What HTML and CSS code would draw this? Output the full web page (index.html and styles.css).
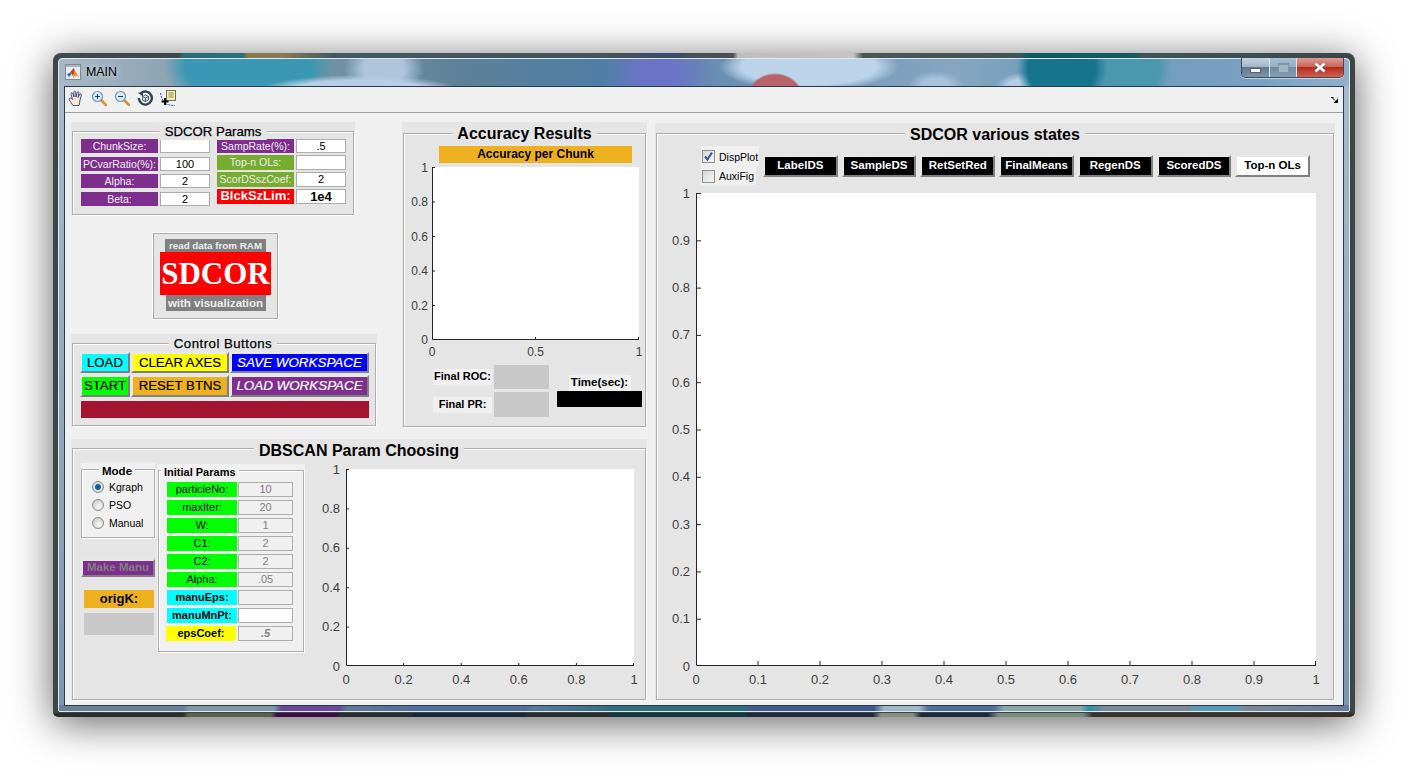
FILE: index.html
```html
<!DOCTYPE html>
<html lang="en">
<head>
<meta charset="UTF-8">
<title>MAIN</title>
<link rel="stylesheet" href="styles.css">
</head>
<body>
<div class="window">
  <div class="glass">
    <div class="titlebar">
      <svg class="app-icon" width="16" height="16" viewBox="0 0 16 16">
        <rect x="0.5" y="0.5" width="15" height="15" fill="#e6ebf0" stroke="#7d8a98"/>
        <path d="M1 1h14v2H1z" fill="#a9b4c0"/>
        <path d="M2 10.5l3-2 1.5 1.5-2.5 3z" fill="#2f6aa8"/>
        <path d="M5 8.5L8.5 4l1.5 3-2 5-2-3z" fill="#c8401a"/>
        <path d="M8.5 4c1.5 2 3 6 5.5 9-1.5-.5-2.5-2-3.5-1.5S9 13.5 8 14c0-2 2-5 .5-10z" fill="#f08c1e"/>
      </svg>
      <span class="window-name">MAIN</span>
      <div class="window-btns">
        <div class="win-btn win-min"><span class="min-bar"></span></div>
        <div class="win-btn win-max"><span class="max-box"></span></div>
        <div class="win-btn win-close">
          <svg width="14" height="11" viewBox="0 0 14 11"><path d="M2.5 1.5l9 8M11.5 1.5l-9 8" stroke="#5a6470" stroke-width="4" opacity=".5"/><path d="M2.5 1.5l9 8M11.5 1.5l-9 8" stroke="#fff" stroke-width="2.6"/></svg>
        </div>
      </div>
    </div>

    <div class="client">
      <div class="toolbar">
        <svg class="tool" width="16" height="16" viewBox="0 0 16 16">
          <path d="M5 15.5C4 13.5 2 11.5 1.2 9.8.7 8.3 2.3 7.5 3.4 8.6l1.1 1L3 4.2C2.7 2.7 4.3 2.3 4.8 3.5L6 7 5.8 2.2C5.8.8 7.6.8 7.7 2.2L8 7l1.2-4.5c.3-1.3 2-1 1.7.5L10 7.5l1.8-3.3c.6-1 2-.5 1.6.7L12 10c-.2 2-.5 3.5-1 5.5z" fill="#fde8d2" stroke="#2b4080" stroke-width=".9"/>
        </svg>
        <svg class="tool" width="16" height="16" viewBox="0 0 16 16">
          <path d="M10 10l5 5" stroke="#d8902c" stroke-width="2.6" stroke-linecap="round"/>
          <circle cx="6.5" cy="6.5" r="5" fill="#dcedf8" stroke="#6f95b4" stroke-width="1.2"/>
          <path d="M4 6.5h5M6.5 4v5" stroke="#1f3f70" stroke-width="1.1"/>
        </svg>
        <svg class="tool" width="16" height="16" viewBox="0 0 16 16">
          <path d="M10 10l5 5" stroke="#d8902c" stroke-width="2.6" stroke-linecap="round"/>
          <circle cx="6.5" cy="6.5" r="5" fill="#dcedf8" stroke="#6f95b4" stroke-width="1.2"/>
          <path d="M4 6.5h5" stroke="#1f3f70" stroke-width="1.1"/>
        </svg>
        <svg class="tool" width="16" height="16" viewBox="0 0 16 16">
          <path d="M4 3.2A6.5 6.5 0 1 1 1.8 8" fill="none" stroke="#2f4358" stroke-width="2.4"/>
          <path d="M.5 2.5H6v4z" fill="#2f4358"/>
          <path d="M5.5 6.5L8.5 5l3 1.5V10l-3 1.5-3-1.5zM5.5 6.5l3 1.5 3-1.5M8.5 8v3.5" fill="#d5dde4" stroke="#2f4358" stroke-width=".8"/>
        </svg>
        <svg class="tool" width="16" height="16" viewBox="0 0 16 16">
          <path d="M.5 3C1 7 3 12 6 14c3 1 6 1.5 9 1.5" fill="none" stroke="#2030d0" stroke-width=".9" stroke-dasharray="2 1"/>
          <rect x="6.5" y="0.5" width="9" height="10" fill="#f2efb4" stroke="#74744a"/>
          <path d="M8.5 3h5M8.5 5h5M8.5 7h5" stroke="#8a8a58"/>
          <path d="M1.5 11.5h7M5 8v7" stroke="#000" stroke-width="2"/>
        </svg>
        <svg class="dock-arrow" width="7" height="6" viewBox="0 0 7 6">
          <path d="M0 .5h2.5M1 .5l3 3" stroke="#000" fill="none"/>
          <path d="M7 1.5V6H2.5z" fill="#000"/>
        </svg>
      </div>

      <div class="workspace">
        <div class="left-area">
          <div class="top-row">
            <div class="left-col">

              <section class="panel params-panel">
                <h2 class="panel-title title-small">SDCOR Params</h2>
                <div class="panel-box params-box">
                  <div class="param-col param-col-left">
                    <div class="param-row"><span class="lbl purple">ChunkSize:</span><span class="val"></span></div>
                    <div class="param-row"><span class="lbl purple">PCvarRatio(%):</span><span class="val">100</span></div>
                    <div class="param-row"><span class="lbl purple">Alpha:</span><span class="val">2</span></div>
                    <div class="param-row"><span class="lbl purple">Beta:</span><span class="val">2</span></div>
                  </div>
                  <div class="param-col param-col-right">
                    <div class="param-row row-first"><span class="lbl purple">SampRate(%):</span><span class="val">.5</span></div>
                    <div class="param-row"><span class="lbl olive">Top-n OLs:</span><span class="val"></span></div>
                    <div class="param-row"><span class="lbl olive">ScorDSszCoef:</span><span class="val">2</span></div>
                    <div class="param-row"><span class="lbl red big">BlckSzLim:</span><span class="val big">1e4</span></div>
                  </div>
                </div>
              </section>

              <div class="logo-box">
                <div class="logo-top">read data from RAM</div>
                <div class="logo-name">SDCOR</div>
                <div class="logo-bottom">with visualization</div>
              </div>

              <section class="panel control-panel">
                <h2 class="panel-title title-small">Control Buttons</h2>
                <div class="panel-box control-box">
                  <div class="control-grid">
                    <button class="btn cyan">LOAD</button>
                    <button class="btn yellow">CLEAR AXES</button>
                    <button class="btn blue wide">SAVE WORKSPACE</button>
                    <button class="btn green">START</button>
                    <button class="btn orange">RESET BTNS</button>
                    <button class="btn purple wide">LOAD WORKSPACE</button>
                  </div>
                  <div class="status-bar"></div>
                </div>
              </section>
            </div>

            <section class="panel accuracy-panel">
              <h2 class="panel-title title-big">Accuracy Results</h2>
              <div class="panel-box accuracy-box">
                <div class="chunk-title">Accuracy per Chunk</div>
                <svg class="axes axes-accuracy" width="207" height="173">
                  <path class="axis" d="M.5 0V172.5H207"/>
                  <path class="axis" d="M0 .5h3M0 35h3M0 69.5h3M0 104h3M0 138.5h3M103.5 173v-3M206.5 173v-3"/>
                  <g class="tick-y tick-small">
                    <text x="-4" y="5">1</text><text x="-4" y="39">0.8</text><text x="-4" y="73.5">0.6</text>
                    <text x="-4" y="108">0.4</text><text x="-4" y="143">0.2</text><text x="-4" y="177">0</text>
                  </g>
                  <g class="tick-x tick-small">
                    <text x="0" y="189">0</text><text x="103.5" y="189">0.5</text><text x="207" y="189">1</text>
                  </g>
                </svg>
                <div class="result-area">
                  <div class="result-col">
                    <div class="result-row"><span class="result-lbl">Final ROC:</span><span class="result-val roc-val"></span></div>
                    <div class="result-row"><span class="result-lbl">Final PR:</span><span class="result-val pr-val"></span></div>
                  </div>
                  <div class="time-col">
                    <span class="time-lbl">Time(sec):</span>
                    <span class="time-val"></span>
                  </div>
                </div>
              </div>
            </section>
          </div>

          <section class="panel dbscan-panel">
            <h2 class="panel-title title-big">DBSCAN Param Choosing</h2>
            <div class="panel-box dbscan-box">
              <div class="dbscan-left">
                <div class="subpanel mode-panel">
                  <h3 class="sub-title mode-title">Mode</h3>
                  <div class="sub-box mode-box">
                    <label class="radio-row"><span class="radio radio-on"></span>Kgraph</label>
                    <label class="radio-row"><span class="radio"></span>PSO</label>
                    <label class="radio-row"><span class="radio"></span>Manual</label>
                  </div>
                </div>
                <button class="btn purple make-manu">Make Manu</button>
                <div class="origk">origK:</div>
                <div class="origk-val"></div>
              </div>

              <div class="subpanel init-panel">
                <h3 class="sub-title init-title">Initial Params</h3>
                <div class="sub-box init-box">
                  <div class="init-row"><span class="init-lbl lime">particleNo:</span><span class="init-val purple-text">10</span></div>
                  <div class="init-row"><span class="init-lbl lime">maxIter:</span><span class="init-val">20</span></div>
                  <div class="init-row"><span class="init-lbl lime">W:</span><span class="init-val">1</span></div>
                  <div class="init-row"><span class="init-lbl lime">C1:</span><span class="init-val">2</span></div>
                  <div class="init-row"><span class="init-lbl lime">C2:</span><span class="init-val">2</span></div>
                  <div class="init-row"><span class="init-lbl lime">Alpha:</span><span class="init-val">.05</span></div>
                  <div class="init-row"><span class="init-lbl aqua">manuEps:</span><span class="init-val"></span></div>
                  <div class="init-row"><span class="init-lbl aqua">manuMnPt:</span><span class="init-val val-white"></span></div>
                  <div class="init-row"><span class="init-lbl gold">epsCoef:</span><span class="init-val val-italic">.5</span></div>
                </div>
              </div>

              <svg class="axes axes-dbscan" width="288" height="197">
                <path class="axis" d="M.5 0V196.5H288"/>
                <path class="axis" d="M0 .5h3M0 39.9h3M0 79.3h3M0 118.7h3M0 158.1h3M57.6 197v-3M115.2 197v-3M172.8 197v-3M230.4 197v-3M287.5 197v-3"/>
                <g class="tick-y">
                  <text x="-6" y="4.5">1</text><text x="-6" y="43.9">0.8</text><text x="-6" y="83.3">0.6</text>
                  <text x="-6" y="122.7">0.4</text><text x="-6" y="162.1">0.2</text><text x="-6" y="201.5">0</text>
                </g>
                <g class="tick-x">
                  <text x="0" y="215">0</text><text x="57.6" y="215">0.2</text><text x="115.2" y="215">0.4</text>
                  <text x="172.8" y="215">0.6</text><text x="230.4" y="215">0.8</text><text x="288" y="215">1</text>
                </g>
              </svg>
            </div>
          </section>
        </div>

        <section class="panel states-panel">
          <h2 class="panel-title title-big">SDCOR various states</h2>
          <div class="panel-box states-box">
            <div class="states-top">
              <div class="checks">
                <label class="check-row check-first"><span class="check check-on"><svg width="11" height="11" viewBox="0 0 11 11"><path d="M2 5.5l2.5 3L9 1.5" fill="none" stroke="#3f4fa0" stroke-width="2"/></svg></span>DispPlot</label>
                <label class="check-row check-second"><span class="check"></span>AuxiFig</label>
              </div>
              <div class="state-btns">
                <button class="btn state-btn">LabelDS</button>
                <button class="btn state-btn">SampleDS</button>
                <button class="btn state-btn">RetSetRed</button>
                <button class="btn state-btn">FinalMeans</button>
                <button class="btn state-btn">RegenDS</button>
                <button class="btn state-btn">ScoredDS</button>
                <button class="btn state-btn state-btn-on">Top-n OLs</button>
              </div>
            </div>
            <svg class="axes axes-states" width="620" height="473">
              <path class="axis" d="M.5 0V472.5H620"/>
              <path class="axis" d="M0 .5h5M0 47.8h5M0 95.1h5M0 142.4h5M0 189.7h5M0 237h5M0 284.3h5M0 331.6h5M0 378.9h5M0 426.2h5M62 473v-5M124 473v-5M186 473v-5M248 473v-5M310 473v-5M372 473v-5M434 473v-5M496 473v-5M558 473v-5M619.5 473v-5"/>
              <g class="tick-y">
                <text x="-6" y="4.5">1</text><text x="-6" y="51.8">0.9</text><text x="-6" y="99.1">0.8</text>
                <text x="-6" y="146.4">0.7</text><text x="-6" y="193.7">0.6</text><text x="-6" y="241">0.5</text>
                <text x="-6" y="288.3">0.4</text><text x="-6" y="335.6">0.3</text><text x="-6" y="382.9">0.2</text>
                <text x="-6" y="430.2">0.1</text><text x="-6" y="477.5">0</text>
              </g>
              <g class="tick-x">
                <text x="0" y="491">0</text><text x="62" y="491">0.1</text><text x="124" y="491">0.2</text>
                <text x="186" y="491">0.3</text><text x="248" y="491">0.4</text><text x="310" y="491">0.5</text>
                <text x="372" y="491">0.6</text><text x="434" y="491">0.7</text><text x="496" y="491">0.8</text>
                <text x="558" y="491">0.9</text><text x="620" y="491">1</text>
              </g>
            </svg>
          </div>
        </section>
      </div>
    </div>
  </div>
</div>
</body>
</html>
```

FILE: styles.css
```css
* {
  box-sizing: border-box;
}

html, body {
  margin: 0;
  height: 100%;
  overflow: hidden;
}

body {
  background-color: white;
  font-family: "Liberation Sans", Arial, sans-serif;
  color: black;
  padding: 53px 0 0 53px;
}

/* window frame */
.window {
  width: 1302px;
  height: 664px;
  padding: 5px;
  border-radius: 8px 8px 5px 5px;
  box-shadow: 0 6px 40px rgba(0, 0, 0, 0.62);
  background-color: #3b4647;
  background-image:
    linear-gradient(90deg, #3d4a4d 0, #3d4a4d 125px, #2a6a74 130px, #2c7078 190px, #8a7a50 195px, #8a7a50 230px, #3e5a60 280px, #46525a 560px, #3a4a70 610px, #3a4a70 625px, #46525a 640px, #4a5050 680px, #bdbdbd 685px, #c4c4c4 800px, #4a5655 810px, #3f5558 965px, #0f5a60 975px, #115c60 1080px, #3d5558 1090px, #3a4648 1302px),
    linear-gradient(90deg, #2c2c2c 0, #2c2c2c 130px, #5c604c 135px, #5c604c 218px, #3a1040 224px, #3a1040 282px, #2c2c2c 288px, #2c2c2c 358px, #1f2538 362px, #1f2538 470px, #2c2c2c 476px, #2c2c2c 555px, #12383c 560px, #12383c 690px, #22283c 695px, #22283c 820px, #8a8a80 828px, #8a8a80 860px, #22283c 868px, #22283c 935px, #7a8a80 945px, #7a8a80 1030px, #3a3028 1040px, #3a3028 1302px);
  background-size: 100% 5px, 100% 4px;
  background-position: 0 0, 0 100%;
  background-repeat: no-repeat;
}

.glass {
  height: 100%;
  padding: 0 5px 5px;
  border: 1px solid #dfe8ee;
  border-radius: 4px 4px 2px 2px;
  background-color: #8ca4b6;
  background-image:
    radial-gradient(ellipse 28px 24px at 716px 38px, #b8626a 92%, transparent 100%),
    radial-gradient(ellipse 90px 24px at 750px 8px, #bcd4ea 75%, transparent 100%),
    radial-gradient(ellipse 28px 16px at 877px 28px, #a8c4dc 50%, transparent 100%),
    radial-gradient(ellipse 105px 18px at 300px 34px, #b7cfe6 70%, transparent 100%),
    radial-gradient(ellipse 40px 30px at 325px 10px, #aec6dc 50%, transparent 100%),
    radial-gradient(ellipse 85px 44px at 190px 8px, #3b97b3 75%, transparent 100%),
    radial-gradient(ellipse 55px 44px at 600px 14px, #6b73c9 25%, transparent 100%),
    radial-gradient(ellipse 45px 44px at 1003px 10px, #17748e 75%, transparent 100%),
    radial-gradient(ellipse 40px 44px at 1072px 10px, #4a98b0 70%, transparent 100%),
    radial-gradient(ellipse 25px 14px at 962px 28px, #b4cce4 55%, transparent 100%),
    linear-gradient(90deg, #a8b9c6 0, #8ea6b6 100px, #5e8198 400px, #4f7da6 540px, #6e90b5 680px, #86a6c0 900px, #6c9abb 1000px, #7aa0c2 1200px, #8fb0c8 100%),
    linear-gradient(90deg, #6a7f9a 0, #6a7f9a 125px, #7d9ba5 130px, #7d9ba5 215px, #6a4a9a 222px, #6a4a9a 280px, #5f7a98 288px, #506f9a 360px, #506f9a 465px, #5a7a9a 475px, #2f6f80 555px, #2f6f80 685px, #3f5a92 695px, #3f5a92 815px, #a0b8c8 825px, #a0b8c8 860px, #4f6f9a 870px, #4f6f9a 935px, #8aa8a8 945px, #8aa8a8 1022px, #2a90a8 1030px, #7a8a98 1045px, #7a8a98 1128px, #5a9ab8 1135px, #5a9ab8 1178px, #7a8a98 1185px, #6a7a9a 100%),
    linear-gradient(#a9bccb, #7c97b0);
  background-size: 100% 27px, 100% 27px, 100% 27px, 100% 27px, 100% 27px, 100% 27px, 100% 27px, 100% 27px, 100% 27px, 100% 27px, 100% 27px, 100% 6px, 100% 100%;
  background-position: 0 0, 0 0, 0 0, 0 0, 0 0, 0 0, 0 0, 0 0, 0 0, 0 0, 0 0, 0 100%, 0 0;
  background-repeat: no-repeat;
}

.titlebar {
  display: flex;
  align-items: flex-start;
  height: 27px;
}

.app-icon {
  margin: 5px 0 0 1px;
}

.window-name {
  margin: 5px 0 0 5px;
  font-size: 12.4px;
  line-height: 16px;
  text-shadow: 0 0 6px rgba(255, 255, 255, 0.75);
}

.window-btns {
  display: flex;
  flex: none;
  width: 103px;
  height: 20px;
  margin: -1px 0 0 auto;
  border: 1px solid #3c4c5c;
  border-top: 0;
  border-radius: 0 0 5px 5px;
  overflow: hidden;
  box-shadow: 0 1px 0 rgba(255, 255, 255, 0.5);
}

.win-btn {
  display: flex;
  align-items: center;
  justify-content: center;
  background: linear-gradient(#c3d2de 0, #a4b8c8 45%, #64798e 50%, #7e93a6 100%);
  border-right: 1px solid #dbe4ea;
}

.win-min {
  width: 28px;
}

.win-max {
  width: 27px;
  background: linear-gradient(#a8c0d2 0, #94aec2 45%, #6f8ca4 50%, #85a0b4 100%);
}

.win-close {
  flex: 1;
  border-right: 0;
  background: linear-gradient(#dc9c92 0, #c9685c 45%, #b52c1e 50%, #d0614e 100%);
}

.min-bar {
  display: block;
  width: 11px;
  height: 5px;
  margin-top: 5px;
  background-color: white;
  border: 1px solid #55626f;
}

.max-box {
  display: block;
  width: 11px;
  height: 10px;
  border: 1px solid #7d96a8;
  border-top-width: 2px;
  background-color: #a0b8c8;
}

.client {
  height: calc(100% - 27px);
  border: 1px solid #2b3a48;
  background-color: #f0f0f0;
}

.toolbar {
  display: flex;
  align-items: center;
  gap: 7px;
  height: 26px;
  padding: 0 5px 3px 3px;
  border-bottom: 1px solid #a0a0a0;
}

.dock-arrow {
  margin: 3px 0 0 auto;
}

.workspace {
  display: flex;
  gap: 8px;
  padding: 9px 0 0 6px;
}

.left-area {
  width: 576px;
}

.top-row {
  display: flex;
  gap: 25px;
  height: 317px;
}

.left-col {
  width: 306px;
}

/* titled panels */
.panel {
  position: relative;
  background-color: #e5e5e5;
  padding: 9px 1px 1px;
}

.panel-box {
  height: 100%;
  border: 1px solid #adadad;
  box-shadow: inset 1px 1px 0 white, 1px 1px 0 white;
}

.panel-title {
  position: absolute;
  left: 50%;
  transform: translateX(-50%);
  margin: 0;
  padding: 0 5px;
  background-color: #e5e5e5;
  white-space: nowrap;
}

.title-small {
  top: 2px;
  font-size: 13.2px;
  font-weight: normal;
  line-height: 16px;
  -webkit-text-stroke: 0.25px black;
}

.control-panel .title-small {
  margin-left: -1px;
  letter-spacing: 0.5px;
}

.title-big {
  top: 2px;
  font-size: 16px;
  font-weight: bold;
  line-height: 20px;
}

/* SDCOR params */
.params-panel {
  width: 284px;
  height: 94px;
}

.params-box {
  display: flex;
  gap: 7px;
  padding: 7px 0 0 8px;
}

.param-col {
  display: flex;
  flex-direction: column;
  width: 129px;
}

.param-col-left {
  gap: 3.5px;
}

.param-col-left .param-row {
  height: 14px;
}

.param-col-right {
  gap: 2px;
}

.param-col-right .param-row {
  height: 15px;
}

.param-col-right .row-first {
  height: 14px;
}

.param-row {
  display: flex;
  gap: 2px;
}

.lbl {
  flex: none;
  width: 77px;
  font-size: 10.5px;
  line-height: 14px;
  text-align: center;
  white-space: nowrap;
  color: #eee;
}

.val {
  flex: 1;
  background-color: white;
  border: 1px solid #adadad;
  font-size: 11px;
  line-height: 13px;
  text-align: center;
}

.purple {
  background-color: #7e2f8e;
}

.olive {
  background-color: #77ac30;
}

.red {
  background-color: #ff0000;
}

.big {
  font-size: 13px;
  font-weight: bold;
}

.lbl.big {
  color: white;
}

/* logo block */
.logo-box {
  display: flex;
  flex-direction: column;
  align-items: center;
  width: 125px;
  height: 86px;
  margin: 17px 0 15px 82px;
  padding-top: 5px;
  background-color: #e5e5e5;
  border: 1px solid #adadad;
  box-shadow: 0 0 0 1px white;
}

.logo-top,
.logo-bottom {
  background-color: #808080;
  color: #eee;
  font-weight: bold;
  text-align: center;
  white-space: nowrap;
}

.logo-top {
  width: 101px;
  height: 13px;
  font-size: 9.8px;
  line-height: 13px;
}

.logo-bottom {
  width: 100px;
  height: 16px;
  font-size: 11.5px;
  line-height: 16px;
}

.logo-name {
  width: 111px;
  height: 43px;
  background-color: #ff0000;
  color: white;
  font-family: "Liberation Serif", serif;
  font-size: 31px;
  font-weight: bold;
  line-height: 43px;
  text-align: center;
}

/* control buttons */
.control-panel {
  height: 93px;
}

.control-box {
  padding: 8px 0 0 7px;
}

.control-grid {
  display: grid;
  grid-template-columns: 50px 98px 139px;
  grid-template-rows: 21px 22px;
  gap: 2px 1px;
}

.btn {
  margin: 0;
  padding: 0;
  border: 2px solid;
  border-color: #e8e8e8 #808080 #808080 #e8e8e8;
  font-family: inherit;
  font-size: 13.2px;
  line-height: 1;
  white-space: nowrap;
  color: black;
  -webkit-text-stroke: 0.2px currentColor;
}

.cyan {
  background-color: #00ffff;
}

.yellow {
  background-color: #ffff00;
}

.green {
  background-color: #00ff00;
}

.orange {
  background-color: #edb120;
}

.blue {
  background-color: #0000ff;
}

.wide {
  font-size: 13.4px;
  font-style: italic;
  color: white;
}

.status-bar {
  width: 288px;
  height: 17px;
  margin: 4px 0 0 1px;
  background-color: #a2142f;
}

/* accuracy */
.accuracy-panel {
  width: 245px;
  height: 306px;
  padding-top: 11px;
}

.accuracy-box {
  padding-top: 12px;
}

.chunk-title {
  width: 193px;
  height: 17px;
  margin-left: 35px;
  background-color: #edb120;
  font-size: 12px;
  font-weight: bold;
  line-height: 16px;
  text-align: center;
}

.axes {
  display: block;
  overflow: visible;
  background-color: white;
}

.axis {
  fill: none;
  stroke: #262626;
  stroke-width: 1;
}

.tick-y text,
.tick-x text {
  fill: #404040;
  font-size: 13px;
}

.tick-small text {
  font-size: 12px;
}

.tick-y {
  text-anchor: end;
}

.tick-x {
  text-anchor: middle;
}

.axes-accuracy {
  margin: 4px 0 0 28px;
}

.result-area {
  display: flex;
  margin: 25px 0 0 29px;
}

.result-col {
  display: flex;
  flex-direction: column;
  gap: 3px;
}

.result-row {
  display: flex;
  align-items: center;
  gap: 2px;
}

.result-lbl {
  width: 59px;
  height: 16px;
  background-color: #f0f0f0;
  font-size: 11px;
  font-weight: bold;
  line-height: 15px;
  text-align: center;
}

.result-val {
  width: 55px;
  background-color: #c8c8c8;
}

.roc-val {
  height: 24px;
}

.pr-val {
  height: 25px;
}

.time-col {
  display: flex;
  flex-direction: column;
  align-items: center;
  width: 85px;
  margin: 10px 0 0 8px;
}

.time-lbl {
  width: 62px;
  height: 16px;
  background-color: #f0f0f0;
  font-size: 11.5px;
  font-weight: bold;
  line-height: 15px;
  text-align: center;
}

.time-val {
  width: 85px;
  height: 16px;
  background-color: black;
}

/* dbscan */
.dbscan-panel {
  height: 262px;
}

.dbscan-box {
  display: flex;
  align-items: flex-start;
  padding: 14px 0 0 8px;
}

.dbscan-left {
  width: 74px;
}

.subpanel {
  position: relative;
  background-color: #f0f0f0;
  padding-top: 6px;
}

.sub-box {
  height: 100%;
  border: 1px solid #adadad;
  box-shadow: inset 1px 1px 0 white, 1px 1px 0 white;
}

.sub-title {
  position: absolute;
  top: 1px;
  margin: 0;
  padding: 0 3px;
  background-color: #f0f0f0;
  font-size: 11.5px;
  font-weight: bold;
  line-height: 14px;
}

.mode-panel {
  height: 75px;
}

.mode-title {
  left: 18px;
}

.mode-box {
  padding: 8px 0 0 10px;
}

.radio-row {
  display: flex;
  align-items: center;
  gap: 5px;
  height: 18px;
  font-size: 10.5px;
}

.radio {
  width: 12px;
  height: 12px;
  border: 1px solid #8c8c8c;
  border-radius: 50%;
  background: radial-gradient(circle at 60% 65%, #f2f2f2 15%, #bcbcbc 100%);
}

.radio-on {
  background: radial-gradient(circle, #0b4f7e 0, #1a70a8 38%, #e2e2e2 48%, #c8c8c8 100%);
}

.make-manu {
  display: block;
  width: 74px;
  height: 18px;
  margin-top: 21px;
  font-size: 11.5px;
  font-weight: bold;
  color: #808080;
  -webkit-text-stroke: 0;
}

.origk {
  width: 70px;
  height: 18px;
  margin: 13px 0 0 3px;
  background-color: #edb120;
  font-size: 13px;
  font-weight: bold;
  line-height: 17px;
  text-align: center;
}

.origk-val {
  width: 70px;
  height: 22px;
  margin: 5px 0 0 3px;
  background-color: #c8c8c8;
}

.init-panel {
  width: 148px;
  height: 188px;
  margin: 1px 0 0 2px;
  padding: 6px 1px 0 1px;
}

.init-title {
  left: 4px;
  font-size: 11px;
}

.init-box {
  display: flex;
  flex-direction: column;
  gap: 3px;
  padding: 11px 0 0 8px;
}

.init-row {
  display: flex;
  gap: 1px;
  height: 15px;
}

.init-lbl {
  width: 70px;
  font-size: 11px;
  line-height: 14px;
  text-align: center;
}

.lime {
  background-color: #00ff00;
}

.aqua {
  background-color: #00ffff;
  font-weight: bold;
}

.gold {
  background-color: #ffff00;
  font-weight: bold;
  margin: 0 1px 0 -1px;
}

.init-val {
  width: 55px;
  background-color: #f0f0f0;
  border: 1px solid #adadad;
  font-size: 11px;
  line-height: 13px;
  text-align: center;
  color: #808080;
}

.purple-text {
  color: #8a6a90;
}

.val-white {
  background-color: white;
}

.val-italic {
  font-style: italic;
  font-weight: bold;
}

.axes-dbscan {
  margin: 6px 0 0 41px;
}

/* right panel */
.states-panel {
  width: 680px;
  height: 578px;
  margin-top: 1px;
  padding-top: 10px;
}

.states-top {
  display: flex;
  height: 59px;
  padding: 12px 0 0 44px;
}

.checks {
  width: 58px;
}

.check-row {
  display: flex;
  align-items: center;
  gap: 4px;
  padding: 1px 0 0 1px;
  background-color: #f0f0f0;
  font-size: 10.5px;
}

.check-first {
  width: 58px;
  height: 20px;
}

.check-second {
  width: 55px;
  height: 19px;
}

.check {
  display: flex;
  align-items: center;
  justify-content: center;
  width: 13px;
  height: 13px;
  border: 1px solid #8e8f8f;
  background: linear-gradient(135deg, #d6d6d6, #f8f8f8);
}

.state-btns {
  display: grid;
  grid-template-columns: repeat(7, 1fr);
  gap: 4px;
  width: 547px;
  height: 22px;
  margin: 9px 0 0 4px;
}

.state-btn {
  background-color: black;
  color: white;
  font-size: 11.5px;
  font-weight: bold;
  -webkit-text-stroke: 0;
}

.state-btn-on {
  background-color: white;
  color: black;
}

.axes-states {
  margin-left: 39px;
}
```
